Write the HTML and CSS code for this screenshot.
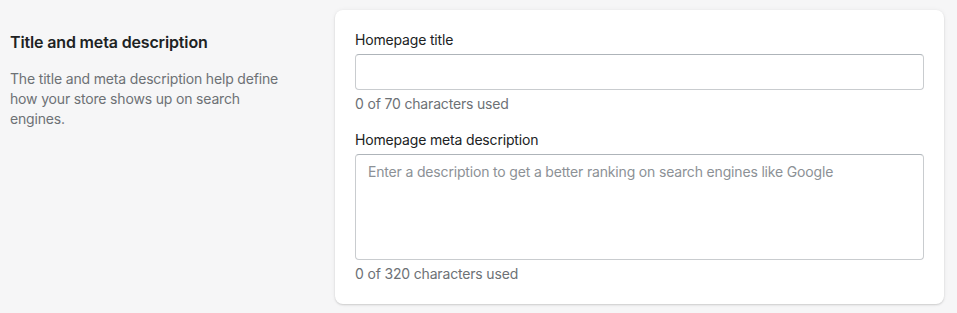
FILE: index.html
```html
<!DOCTYPE html>
<html lang="en">
<head>
<meta charset="utf-8">
<title>Title and meta description</title>
<link rel="stylesheet" href="styles.css">
</head>
<body>
<div class="layout">
  <div class="annotation">
    <h2 class="annotation-title">Title and meta description</h2>
    <p class="annotation-desc">The title and meta description help define how your store shows up on search engines.</p>
  </div>
  <div class="card">
    <div class="field">
      <label class="label" for="title">Homepage title</label>
      <input class="input" id="title" type="text">
      <div class="help">0 of 70 characters used</div>
    </div>
    <div class="field">
      <label class="label" for="desc">Homepage meta description</label>
      <textarea class="input textarea" id="desc" placeholder="Enter a description to get a better ranking on search engines like Google"></textarea>
      <div class="help">0 of 320 characters used</div>
    </div>
  </div>
</div>
</body>
</html>
```
FILE: styles.css
```css
html, body {
  margin: 0;
  padding: 0;
  background: #f6f6f7;
}
body {
  font-family: Inter, "Noto Sans", sans-serif;
  font-size: 14px;
  line-height: 20px;
  letter-spacing: -0.17px;
  color: #202223;
}
.layout {
  display: grid;
  grid-template-columns: 305px 1fr;
  column-gap: 20px;
  padding: 10px 13px 9px 10px;
  align-items: start;
}
.annotation {
  padding-top: 20px;
}
.annotation-title {
  margin: 0;
  font-size: 16px;
  line-height: 24px;
  font-weight: 600;
  letter-spacing: -0.15px;
  color: #202223;
}
.annotation-desc {
  margin: 15px 0 0;
  width: 286px;
  color: #6d7175;
}
.card {
  background: #ffffff;
  border-radius: 8px;
  box-shadow: 0 0 5px rgba(23, 24, 24, 0.05), 0 1px 2px rgba(0, 0, 0, 0.15);
  padding: 20px;
  display: flex;
  flex-direction: column;
  gap: 16px;
}
.field {
  display: flex;
  flex-direction: column;
}
.label {
  display: block;
  margin-bottom: 4px;
  color: #202223;
}
.input {
  box-sizing: border-box;
  width: 100%;
  height: 36px;
  margin: 0;
  padding: 7px 12px;
  font-family: inherit;
  font-size: 14px;
  line-height: 20px;
  letter-spacing: -0.17px;
  color: #202223;
  background: #ffffff;
  border: 1px solid #c9cccf;
  border-top-color: #aeb4b9;
  border-radius: 4px;
  outline: none;
}
.textarea {
  height: 106px;
  resize: none;
  display: block;
}
.textarea::placeholder {
  color: #8c9196;
}
.help {
  margin-top: 4px;
  color: #6d7175;
}
```
